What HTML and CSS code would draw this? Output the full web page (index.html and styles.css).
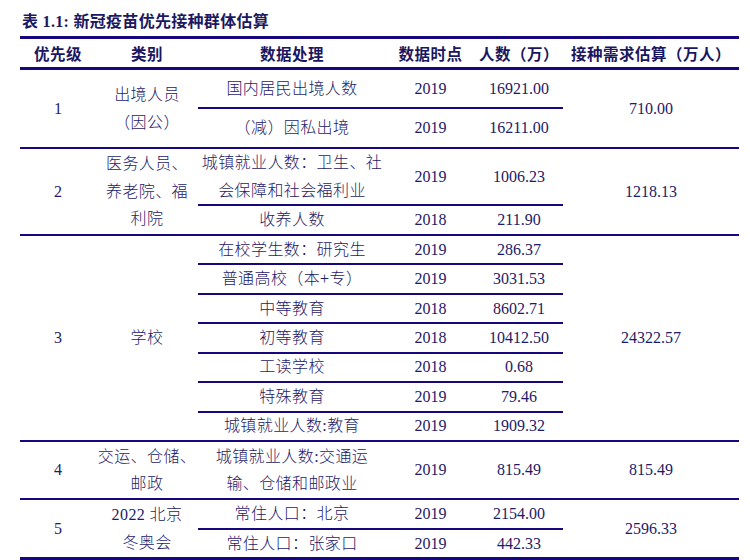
FILE: index.html
```html
<!DOCTYPE html>
<html lang="zh-CN">
<head>
<meta charset="utf-8">
<title>新冠疫苗优先接种群体估算</title>
<link rel="stylesheet" href="styles.css">
</head>
<body>
<div class="page">
  <h1 class="title"><span class="lat">表 1.1:</span> 新冠疫苗优先接种群体估算</h1>
  <table class="grid">
    <colgroup>
      <col class="c1"><col class="c2"><col class="c3"><col class="c4"><col class="c5"><col class="c6">
    </colgroup>
    <thead>
      <tr class="h-head">
        <th>优先级</th><th>类别</th><th>数据处理</th><th>数据时点</th><th>人数（万）</th><th>接种需求估算（万人）</th>
      </tr>
    </thead>
    <tbody>
      <tr class="h40a">
        <td rowspan="2" class="num">1</td>
        <td rowspan="2" class="multi">出境人员<br>（因公）</td>
        <td>国内居民出境人数</td><td class="num">2019</td><td class="num">16921.00</td>
        <td rowspan="2" class="num">710.00</td>
      </tr>
      <tr class="h40b">
        <td>（减）因私出境</td><td class="num">2019</td><td class="num">16211.00</td>
      </tr>

      <tr class="h56">
        <td rowspan="2" class="num">2</td>
        <td rowspan="2" class="multi">医务人员、<br>养老院、福<br>利院</td>
        <td class="multi">城镇就业人数：卫生、社<br>会保障和社会福利业</td><td class="num">2019</td><td class="num">1006.23</td>
        <td rowspan="2" class="num">1218.13</td>
      </tr>
      <tr class="h30">
        <td>收养人数</td><td class="num">2018</td><td class="num">211.90</td>
      </tr>

      <tr class="h29">
        <td rowspan="7" class="num">3</td>
        <td rowspan="7">学校</td>
        <td>在校学生数：研究生</td><td class="num">2019</td><td class="num">286.37</td>
        <td rowspan="7" class="num">24322.57</td>
      </tr>
      <tr class="h29"><td>普通高校（本+专）</td><td class="num">2019</td><td class="num">3031.53</td></tr>
      <tr class="h29"><td>中等教育</td><td class="num">2018</td><td class="num">8602.71</td></tr>
      <tr class="h29"><td>初等教育</td><td class="num">2018</td><td class="num">10412.50</td></tr>
      <tr class="h29"><td>工读学校</td><td class="num">2018</td><td class="num">0.68</td></tr>
      <tr class="h29"><td>特殊教育</td><td class="num">2019</td><td class="num">79.46</td></tr>
      <tr class="h29"><td>城镇就业人数:教育</td><td class="num">2019</td><td class="num">1909.32</td></tr>

      <tr class="h58">
        <td class="num">4</td>
        <td class="multi">交运、仓储、<br>邮政</td>
        <td class="multi">城镇就业人数:交通运<br>输、仓储和邮政业</td><td class="num">2019</td><td class="num">815.49</td>
        <td class="num">815.49</td>
      </tr>

      <tr class="h30 last-a">
        <td rowspan="2" class="num last">5</td>
        <td rowspan="2" class="multi last">2022 北京<br>冬奥会</td>
        <td>常住人口：北京</td><td class="num">2019</td><td class="num">2154.00</td>
        <td rowspan="2" class="num last">2596.33</td>
      </tr>
      <tr class="h30 last-b">
        <td class="last">常住人口：张家口</td><td class="num last">2019</td><td class="num last">442.33</td>
      </tr>
    </tbody>
  </table>
</div>
</body>
</html>
```

FILE: styles.css
```css
html, body {
  margin: 0;
  padding: 0;
  background: #ffffff;
}

.page {
  padding: 12px 0 0 20px;
  font-family: "Liberation Serif", "Noto Sans CJK SC", serif;
  color: #1e1a68;
}

.title {
  margin: 0 0 4px 2px;
  font-size: 16px;
  line-height: 20px;
  font-weight: 700;
  font-family: "Liberation Serif", "Noto Sans CJK SC", serif;
  color: #1c1862;
  letter-spacing: 0.3px;
}

.grid {
  width: 719px;
  table-layout: fixed;
  border-collapse: separate;
  border-spacing: 0;
  font-size: 16px;
}

.c1 { width: 76px; }
.c2 { width: 102px; }
.c3 { width: 188px; }
.c4 { width: 89px; }
.c5 { width: 88px; }
.c6 { width: 176px; }

.grid th {
  height: 28px;
  padding: 0;
  border-top: 3px solid #16077c;
  border-bottom: 3px solid #16077c;
  font-weight: 700;
  font-size: 15.5px;
  white-space: nowrap;
  text-align: center;
  vertical-align: middle;
  letter-spacing: 0.5px;
  color: #1a1660;
}

.grid td {
  padding: 0;
  text-align: center;
  vertical-align: middle;
  border-bottom: 2px solid #16077c;
  white-space: nowrap;
  line-height: 20px;
  letter-spacing: 0.4px;
  font-weight: 300;
}

.grid td.num {
  letter-spacing: 0;
  font-weight: 400;
}

.grid td.multi {
  line-height: 27.5px;
}

.grid td.last {
  border-bottom-width: 3px;
}

.h40a { height: 39px; }
.h40b { height: 40px; }
.h56 { height: 56px; }
.h30 { height: 30px; }
.h29 { height: 29.45px; }
.h58 { height: 58px; }
.last-b { height: 30px; }
```
